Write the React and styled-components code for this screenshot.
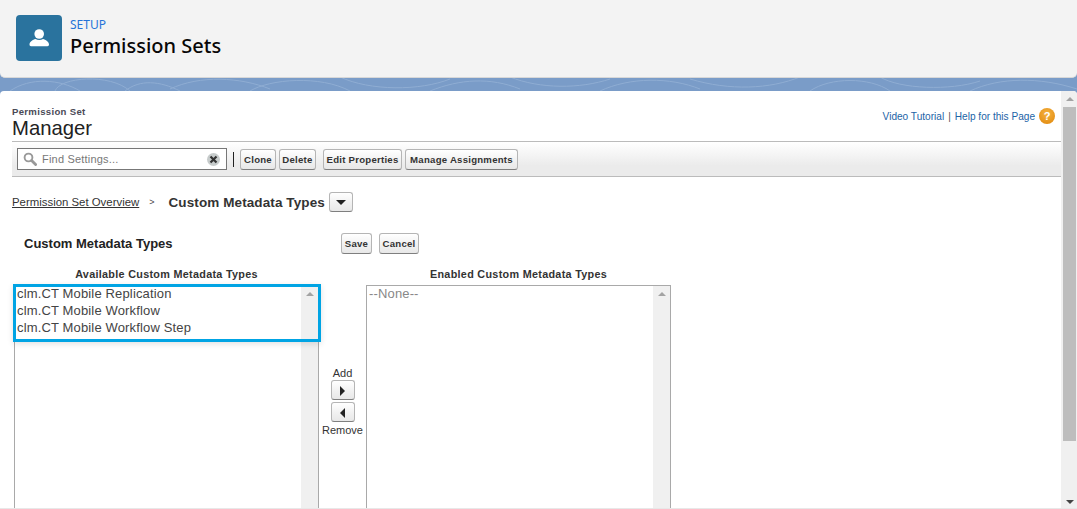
import React from 'react';
import styled, { createGlobalStyle } from 'styled-components';

const GlobalStyle = createGlobalStyle`
  html, body {
    margin: 0;
    padding: 0;
    height: 100%;
    overflow: hidden;
    background: #b0c4df;
    font-family: "Liberation Sans", Arial, sans-serif;
  }
  * { box-sizing: border-box; }
`;

const Page = styled.div`
  width: 1077px;
  height: 509px;
  display: flex;
  flex-direction: column;
  overflow: hidden;
  background: #7a9cc8;
`;

const Header = styled.header`
  height: 78px;
  flex: none;
  display: flex;
  align-items: flex-start;
  gap: 8px;
  padding: 15px 16px 0;
  background: #f3f3f3;
  border-bottom: 1px solid #d8d8d8;
  border-radius: 0 0 5px 5px;
  position: relative;
  z-index: 1;
`;

const IconTile = styled.div`
  width: 46px;
  height: 46px;
  border-radius: 4px;
  background: #2a739e;
  display: flex;
  align-items: center;
  justify-content: center;
`;

const HeaderText = styled.div`
  display: flex;
  flex-direction: column;
`;

const Eyebrow = styled.a`
  font-family: "Noto Sans", "Open Sans", sans-serif;
  font-size: 12px;
  line-height: 19px;
  color: #2573d8;
`;

const PageTitle = styled.h1`
  margin: 0;
  font-family: "Noto Sans", "Open Sans", sans-serif;
  font-size: 20px;
  line-height: 24px;
  font-weight: 500;
  color: #080707;
`;

const Band = styled.div`
  height: 14px;
  flex: none;
  margin-top: -1px;
  background: #7a9cc8;
  overflow: hidden;
  svg { display: block; }
`;

const Panel = styled.main`
  flex: 1;
  min-height: 0;
  display: flex;
  background: #fff;
  border-radius: 4px 4px 0 0;
  border-bottom: 1px solid #e8e8e8;
  overflow: hidden;
`;

const Content = styled.div`
  flex: 1;
  min-width: 0;
  display: flex;
  flex-direction: column;
  padding: 15px 0 0 12px;
`;

const TitleRow = styled.div`
  display: flex;
  justify-content: space-between;
  align-items: flex-start;
  height: 36px;
`;

const TitleBlock = styled.div`
  display: flex;
  flex-direction: column;
`;

const Kicker = styled.div`
  font-size: 9.6px;
  line-height: 11px;
  font-weight: 700;
  letter-spacing: 0.3px;
  color: #4a4a56;
`;

const Subject = styled.div`
  font-size: 20.3px;
  line-height: 22px;
  color: #222;
`;

const HelpLinks = styled.div`
  display: flex;
  align-items: center;
  gap: 4px;
  padding: 2px 6px 0 0;
  font-size: 10.1px;
  color: #015ba7;
`;

const HelpLink = styled.a`
  color: #1c64a6;
`;

const HelpDivider = styled.span`
  color: #555;
`;

const HelpBadge = styled.div`
  width: 16px;
  height: 16px;
  border-radius: 50%;
  background: radial-gradient(circle at 50% 35%, #f5b342, #df8508);
  color: #fff;
  font-size: 11px;
  font-weight: 700;
  line-height: 16px;
  text-align: center;
`;

const Toolbar = styled.div`
  height: 36px;
  flex: none;
  margin-top: 2px;
  display: flex;
  align-items: center;
  padding: 0 0 0 5px;
  border-top: 1px solid #bbb;
  border-bottom: 1px solid #bbb;
  background: linear-gradient(#fff, #ebebeb 70%);
`;

const SearchBox = styled.div`
  width: 210px;
  height: 22px;
  flex: none;
  display: flex;
  align-items: center;
  padding: 0 6px 0 5px;
  gap: 5px;
  background: #fff;
  border: 1px solid #777;
  font-size: 11px;
  color: #777;
`;

const SearchLabel = styled.span`
  flex: 1;
  letter-spacing: 0.2px;
`;

const ClearButton = styled.span`
  width: 13px;
  height: 13px;
  border-radius: 50%;
  background: #c6cbcb;
  display: flex;
  align-items: center;
  justify-content: center;
`;

const ToolDivider = styled.span`
  width: 1px;
  height: 15px;
  margin: 0 6px;
  background: #222;
`;

const Button = styled.button`
  height: ${(p) => p.$h || 21}px;
  width: ${(p) => p.$w}px;
  flex: none;
  margin-left: ${(p) => p.$ml || 0}px;
  padding: 0;
  font-family: "Liberation Sans", Arial, sans-serif;
  font-size: 9.6px;
  font-weight: 700;
  letter-spacing: 0.25px;
  color: #333;
  border: 1px solid #b5b5b5;
  border-bottom-color: #7f7f7f;
  border-radius: 3px;
  background: linear-gradient(#fff, #f0f0f0 60%, #e8e8e8);
  display: flex;
  align-items: center;
  justify-content: center;
`;

const Breadcrumbs = styled.nav`
  display: flex;
  align-items: center;
  height: 21px;
  margin-top: 15px;
`;

const CrumbLink = styled.a`
  font-size: 11.4px;
  color: #333;
  text-decoration: underline;
`;

const CrumbArrow = styled.span`
  margin: 0 14px 0 10px;
  font-size: 9px;
  color: #444;
`;

const CrumbCurrent = styled.span`
  font-size: 13.5px;
  font-weight: 700;
  letter-spacing: 0.1px;
  color: #333;
  margin-right: 4px;
`;

const Caret = styled.span`
  width: 0;
  height: 0;
  border-left: 5px solid transparent;
  border-right: 5px solid transparent;
  border-top: 5px solid #222;
`;

const SectionHead = styled.div`
  display: flex;
  align-items: center;
  height: 20px;
  margin-top: 21px;
  padding-left: 12px;
`;

const SectionTitle = styled.h2`
  margin: 0;
  width: 317px;
  font-size: 13px;
  font-weight: 700;
  color: #222;
`;

const SectionActions = styled.div`
  display: flex;
  gap: 7px;
`;

const Duel = styled.div`
  display: flex;
  align-items: flex-start;
  margin-top: 14px;
  padding-left: 2px;
`;

const ListColumn = styled.div`
  width: 305px;
  flex: none;
  position: relative;
  display: flex;
  flex-direction: column;
`;

const ColumnLabel = styled.div`
  height: 18px;
  font-size: 10.8px;
  line-height: 14px;
  font-weight: 700;
  letter-spacing: 0.3px;
  color: #333;
  text-align: center;
`;

const ListBox = styled.div`
  height: 240px;
  display: flex;
  justify-content: space-between;
  border: 1px solid #a9a9a9;
  background: #fff;
`;

const Options = styled.div`
  margin-top: -1px;
  padding: 0 2px;
  font-size: 13px;
  line-height: 17px;
  letter-spacing: 0.15px;
  color: ${(p) => (p.$muted ? '#888' : '#444')};
`;

const ListScroll = styled.div`
  width: 17px;
  flex: none;
  background: #f0f0f0;
  display: flex;
  justify-content: center;
  padding-top: 6px;
`;

const UpArrow = styled.span`
  width: 0;
  height: 0;
  border-left: 4px solid transparent;
  border-right: 4px solid transparent;
  border-bottom: 4px solid #a3a3a3;
`;

const Highlight = styled.div`
  position: absolute;
  left: -1px;
  top: 17px;
  width: 308px;
  height: 58px;
  border: 3px solid #00a4e4;
  box-shadow: 0 2px 6px rgba(0, 0, 0, 0.12);
  pointer-events: none;
`;

const MoveColumn = styled.div`
  width: 47px;
  flex: none;
  align-self: stretch;
  display: flex;
  flex-direction: column;
  align-items: center;
  gap: 2px;
  padding-top: 101px;
  font-size: 11px;
  line-height: 10px;
  color: #333;

  span:last-child {
    margin-top: 1px;
  }
`;

const MoveButton = styled(Button)`
  width: 24px;
  height: 20px;
`;

const Triangle = styled.span`
  width: 0;
  height: 0;
  border-top: 5px solid transparent;
  border-bottom: 5px solid transparent;
  border-left: ${(p) => (p.$dir === 'right' ? '5px solid #222' : 'none')};
  border-right: ${(p) => (p.$dir === 'left' ? '5px solid #222' : 'none')};
`;

const PageScroll = styled.div`
  width: 16px;
  flex: none;
  background: #f0f0f0;
  display: flex;
  flex-direction: column;
  align-items: center;
  padding: 0 0 0 1px;
`;

const ScrollUp = styled.span`
  height: 16px;
  display: flex;
  align-items: center;
`;

const ScrollThumb = styled.div`
  width: 13px;
  height: 334px;
  background: #bdbdbd;
`;

const ScrollDown = styled.span`
  margin-top: auto;
  margin-bottom: 4px;
  width: 0;
  height: 0;
  border-left: 4px solid transparent;
  border-right: 4px solid transparent;
  border-top: 4px solid #444;
`;

const swirls = [
  'M10 14 C30 0 60 2 80 14',
  'M55 14 C60 0 110 -4 130 14',
  'M125 14 C140 2 160 4 180 14',
  'M170 12 C200 -2 240 0 270 12',
  'M250 14 C270 2 320 -2 350 14',
  'M340 0 C370 14 420 14 450 2',
  'M430 14 C460 2 490 0 520 12',
  'M510 0 C540 12 580 12 610 2',
  'M600 14 C630 0 670 0 700 12',
  'M690 2 C730 14 770 12 800 0',
  'M810 14 C830 0 870 0 890 14',
  'M880 0 C900 12 950 14 980 4',
  'M970 14 C1000 0 1040 0 1077 12',
];

const App = () => {
  return (
    <Page>
      <GlobalStyle />
      <Header>
        <IconTile>
          <svg width="22" height="22" viewBox="0 0 22 22" fill="#fff">
            <circle cx="11.2" cy="7" r="4.8" />
            <path d="M1.5 17.5 C1.5 14.5 5 12.8 7.5 12 C9.5 13.2 13 13.2 15 12 C17.5 12.8 21 14.5 21 17.5 C21 18.6 20.3 19.2 19.4 19.2 L3 19.2 C2.2 19.2 1.5 18.6 1.5 17.5 Z" />
          </svg>
        </IconTile>
        <HeaderText>
          <Eyebrow>SETUP</Eyebrow>
          <PageTitle>Permission Sets</PageTitle>
        </HeaderText>
      </Header>

      <Band>
        <svg width="1077" height="14" viewBox="0 0 1077 14" fill="none" stroke="#8fadd3" strokeWidth="1">
          {swirls.map((d) => (
            <path key={d} d={d} />
          ))}
        </svg>
      </Band>

      <Panel>
        <Content>
          <TitleRow>
            <TitleBlock>
              <Kicker>Permission Set</Kicker>
              <Subject>Manager</Subject>
            </TitleBlock>
            <HelpLinks>
              <HelpLink>Video Tutorial</HelpLink>
              <HelpDivider>|</HelpDivider>
              <HelpLink>Help for this Page</HelpLink>
              <HelpBadge>?</HelpBadge>
            </HelpLinks>
          </TitleRow>

          <Toolbar>
            <SearchBox>
              <svg width="14" height="14" viewBox="0 0 14 14" fill="none" stroke="#999">
                <circle cx="5.5" cy="5.5" r="3.9" strokeWidth="1.9" />
                <path d="M8.6 8.6 L12.6 12.6" strokeWidth="2.8" strokeLinecap="round" />
              </svg>
              <SearchLabel>Find Settings...</SearchLabel>
              <ClearButton>
                <svg width="9" height="9" viewBox="0 0 9 9" stroke="#333" strokeWidth="2.2">
                  <path d="M1.5 1.5 L7.5 7.5 M7.5 1.5 L1.5 7.5" />
                </svg>
              </ClearButton>
            </SearchBox>
            <ToolDivider />
            <Button $w={36}>Clone</Button>
            <Button $w={37} $ml={3}>Delete</Button>
            <Button $w={79} $ml={7}>Edit Properties</Button>
            <Button $w={113} $ml={3}>Manage Assignments</Button>
          </Toolbar>

          <Breadcrumbs>
            <CrumbLink>Permission Set Overview</CrumbLink>
            <CrumbArrow>&gt;</CrumbArrow>
            <CrumbCurrent>Custom Metadata Types</CrumbCurrent>
            <Button $w={24} $h={20}>
              <Caret />
            </Button>
          </Breadcrumbs>

          <SectionHead>
            <SectionTitle>Custom Metadata Types</SectionTitle>
            <SectionActions>
              <Button $w={31}>Save</Button>
              <Button $w={40}>Cancel</Button>
            </SectionActions>
          </SectionHead>

          <Duel>
            <ListColumn>
              <ColumnLabel>Available Custom Metadata Types</ColumnLabel>
              <ListBox>
                <Options>
                  <div>clm.CT Mobile Replication</div>
                  <div>clm.CT Mobile Workflow</div>
                  <div>clm.CT Mobile Workflow Step</div>
                </Options>
                <ListScroll>
                  <UpArrow />
                </ListScroll>
              </ListBox>
              <Highlight />
            </ListColumn>

            <MoveColumn>
              <span>Add</span>
              <MoveButton>
                <Triangle $dir="right" />
              </MoveButton>
              <MoveButton>
                <Triangle $dir="left" />
              </MoveButton>
              <span>Remove</span>
            </MoveColumn>

            <ListColumn>
              <ColumnLabel>Enabled Custom Metadata Types</ColumnLabel>
              <ListBox>
                <Options $muted>--None--</Options>
                <ListScroll>
                  <UpArrow />
                </ListScroll>
              </ListBox>
            </ListColumn>
          </Duel>
        </Content>

        <PageScroll>
          <ScrollUp>
            <UpArrow />
          </ScrollUp>
          <ScrollThumb />
          <ScrollDown />
        </PageScroll>
      </Panel>
    </Page>
  );
};

export default App;
